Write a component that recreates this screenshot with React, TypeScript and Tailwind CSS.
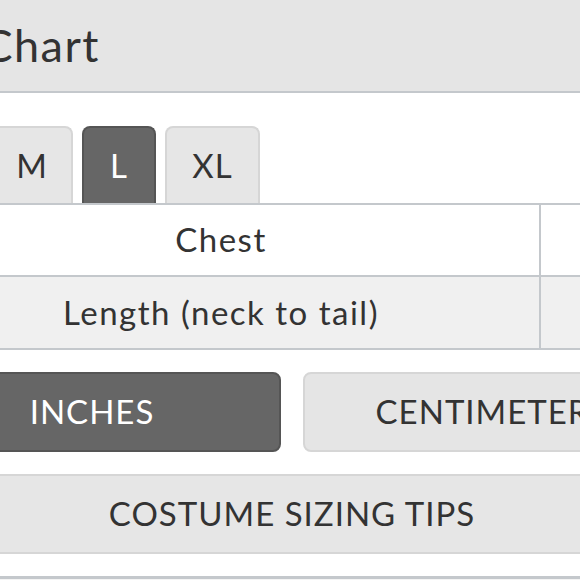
const font = { fontFamily: 'Lato, "Open Sans", sans-serif' }

const tabs = [
  { label: 'S', w: 'w-[74px]' },
  { label: 'M', w: 'w-[82px]' },
  { label: 'L', w: 'w-[74px]' },
  { label: 'XL', w: 'w-[95px]' },
]

export default function App() {
  return (
    <div className="w-[580px] h-[580px] overflow-hidden bg-white text-[#333]" style={font}>
      <div className="w-[780px] ml-[-97px]">
        <div className="h-[93px] bg-[#e5e5e5] border-b-2 border-[#c4c8cc] flex items-center">
          <div className="w-[197px] shrink-0 flex justify-end">
            <h1 className="text-[45px] leading-none tracking-[1.5px] whitespace-nowrap">Size Chart</h1>
          </div>
        </div>

        <div className="flex items-end gap-[9px] pt-[33px] pl-[5px]">
          {tabs.map((t) => (
            <div
              key={t.label}
              className={`${t.w} h-[77px] shrink-0 flex items-center justify-center rounded-t-[8px] border-2 border-b-0 text-[33px] tracking-[1px] ${
                t.label === 'L' ? 'bg-[#666] border-[#555] text-white' : 'bg-[#e6e6e6] border-[#d6d6d6] text-[#333]'
              }`}
            >
              {t.label}
            </div>
          ))}
        </div>

        <div className="border-t-2 border-[#c4c8cc]">
          <div className="flex h-[72px] bg-white border-b-2 border-[#c4c8cc]">
            <div className="w-[638px] flex items-center justify-center text-[33px] tracking-[1.5px] border-r-2 border-[#c4c8cc]">Chest</div>
            <div className="flex-1" />
          </div>
          <div className="flex h-[73px] bg-[#f0f0f0] border-b-2 border-[#c4c8cc]">
            <div className="w-[638px] flex items-center justify-center text-[33px] tracking-[1.5px] border-r-2 border-[#c4c8cc]">Length (neck to tail)</div>
            <div className="flex-1" />
          </div>
        </div>

        <div className="flex gap-[22px] mt-[22px]">
          <button className="w-[378px] h-[80px] rounded-[8px] bg-[#666] border-2 border-[#555] text-white text-[33px] tracking-[1px]">INCHES</button>
          <button className="w-[378px] h-[80px] rounded-[8px] bg-[#e5e5e5] border-2 border-[#d6d6d6] text-[#333] text-[33px] tracking-[1px]">CENTIMETERS</button>
        </div>

        <button className="mt-[22px] w-[778px] h-[80px] rounded-[8px] bg-[#e6e6e6] border-2 border-[#d6d6d6] text-[#333] text-[33px] tracking-[1px]">
          COSTUME SIZING TIPS
        </button>

        <div className="mt-[22px] border-t-[3px] border-[#c4c8cc] h-[10px] bg-[#f4f4f4]" />
      </div>
    </div>
  )
}
